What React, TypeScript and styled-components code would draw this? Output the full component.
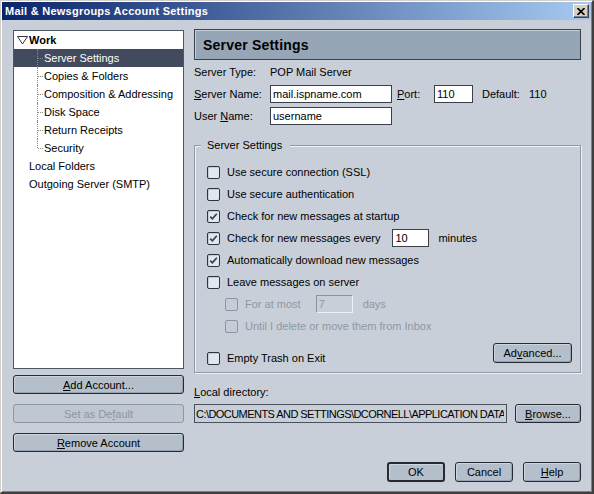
import React from 'react';
import styled, { createGlobalStyle, css } from 'styled-components';

const GlobalStyle = createGlobalStyle`
  * { box-sizing: border-box; }
  html, body { margin: 0; padding: 0; background: #c8cfd8; }
  body {
    font-family: "Liberation Sans", Arial, sans-serif;
    font-size: 11px;
    color: #000;
  }
`;

const Window = styled.div`
  width: 594px;
  height: 494px;
  display: flex;
  flex-direction: column;
  background: #c8cfd8;
  border-style: solid;
  border-width: 1px 2px 2px 1px;
  border-color: #d4d0c8 #404040 #404040 #d4d0c8;
  padding: 1px;
  box-shadow: inset 1px 1px 0 #ffffff, inset -1px -1px 0 #808080;
`;

const TitleBar = styled.div`
  height: 18px;
  flex: none;
  display: flex;
  align-items: center;
  justify-content: space-between;
  padding: 0 2px 0 3px;
  background: linear-gradient(90deg, #0a246a 0%, #a6caf0 100%);
`;

const Title = styled.span`
  color: #fff;
  font-weight: bold;
  font-size: 11px;
  letter-spacing: 0.25px;
`;

const CloseButton = styled.div`
  width: 16px;
  height: 14px;
  display: flex;
  align-items: center;
  justify-content: center;
  background: #d4d0c8;
  border-style: solid;
  border-width: 1px;
  border-color: #ffffff #404040 #404040 #ffffff;
  box-shadow: inset -1px -1px 0 #808080;
`;

const Body = styled.div`
  flex: 1;
  display: flex;
  flex-direction: column;
  padding: 9px 10px 0 11px;
`;

const Main = styled.div`
  display: flex;
  gap: 10px;
`;

const LeftColumn = styled.div`
  width: 171px;
  display: flex;
  flex-direction: column;
`;

const Tree = styled.div`
  margin-top: 1px;
  height: 339px;
  background: #fff;
  border: 1px solid #4e5563;
`;

const TreeRow = styled.div<{ $indent: number; $selected?: boolean; $bold?: boolean }>`
  position: relative;
  height: 18px;
  display: flex;
  align-items: center;
  padding-left: ${p => p.$indent}px;
  white-space: nowrap;
  font-weight: ${p => (p.$bold ? 'bold' : 'normal')};
  background: ${p => (p.$selected ? '#414b5d' : 'transparent')};
  color: ${p => (p.$selected ? '#fff' : '#000')};
`;

const ChildRow = styled(TreeRow)<{ $last?: boolean }>`
  &::before {
    content: '';
    position: absolute;
    left: 23px;
    top: 0;
    height: ${p => (p.$last ? '9px' : '18px')};
    border-left: 1px dotted #8a8a8a;
  }
  &::after {
    content: '';
    position: absolute;
    left: 24px;
    top: 9px;
    width: 5px;
    border-top: 1px dotted #8a8a8a;
  }
`;

const Twisty = styled.svg`
  width: 11px;
  height: 9px;
  margin-right: 1px;
  flex: none;
`;

const SideButtons = styled.div`
  margin-top: 6px;
  display: flex;
  flex-direction: column;
  gap: 10px;
`;

const Button = styled.button<{ $width?: number; $height?: number; $default?: boolean }>`
  width: ${p => (p.$width ? `${p.$width}px` : '100%')};
  height: ${p => p.$height ?? 19}px;
  padding: 0;
  font-family: "Liberation Sans", Arial, sans-serif;
  font-size: 11px;
  color: #000;
  background: #b4bfcb;
  border: 1px solid #262a33;
  border-radius: 3px;
  box-shadow: inset 1px 1px 0 #cdd5de, inset -1px -1px 0 #97a3b1;
  ${p =>
    p.$default &&
    css`
      border-width: 2px;
      box-shadow: inset 1px 1px 0 #cdd5de;
    `}
  &:disabled {
    color: #8c96a3;
    background: #bfc7d1;
    border-color: #8d97a5;
    box-shadow: none;
  }
  u { text-decoration: underline; }
`;

const RightColumn = styled.div`
  width: 387px;
  display: flex;
  flex-direction: column;
`;

const PanelHeader = styled.div`
  height: 31px;
  display: flex;
  align-items: center;
  padding-left: 8px;
  background: #97a6b6;
  border: 1px solid #3a404c;
  box-shadow: inset 1px 1px 0 #c4ced8;
  font-size: 14px;
  font-weight: bold;
  letter-spacing: 0.2px;
`;

const Fields = styled.div`
  margin-top: 3px;
  display: flex;
  flex-direction: column;
  gap: 4px;
`;

const FieldRow = styled.div`
  height: 18px;
  display: flex;
  align-items: center;
  white-space: nowrap;
`;

const FieldLabel = styled.span<{ $width: number; $gap?: number }>`
  width: ${p => p.$width}px;
  margin-left: ${p => p.$gap ?? 0}px;
  margin-right: -1px;
  flex: none;
`;

const TextInput = styled.input<{ $width: number; $gap?: number }>`
  width: ${p => p.$width}px;
  height: 18px;
  margin-left: ${p => p.$gap ?? 0}px;
  padding: 0 2px;
  font-family: "Liberation Sans", Arial, sans-serif;
  font-size: 11px;
  color: #000;
  background: #fff;
  border: 1px solid #3a3f4a;
  outline: none;
  &:disabled {
    color: #9099a6;
    background: #c8cfd8;
    border-color: #8a94a0 #eef1f4 #eef1f4 #8a94a0;
  }
  &:read-only:not(:disabled) {
    background: #c8cfd8;
    border-color: #4a505c;
  }
`;

const PathInput = styled(TextInput)`
  height: 19px;
  padding-left: 1px;
  letter-spacing: -0.55px;
`;

const Group = styled.fieldset`
  margin: 14px 0 0 0;
  min-width: 0;
  padding: 9px 8px 7px 12px;
  border: 1px solid #909aa6;
  box-shadow: inset 1px 1px 0 #eef1f4, 1px 1px 0 #eef1f4;
`;

const Legend = styled.legend`
  margin-left: -6px;
  padding: 0 8px 0 6px;
  line-height: 13px;
  background: #c8cfd8;
`;

const CheckRow = styled.div<{ $indent?: number }>`
  height: 22px;
  display: flex;
  align-items: center;
  padding-left: ${p => p.$indent ?? 0}px;
  white-space: nowrap;
`;

const CheckItem = styled.label<{ $disabled?: boolean }>`
  display: inline-flex;
  align-items: center;
  line-height: 13px;
  color: ${p => (p.$disabled ? '#8e98a5' : '#000')};
`;

const Box = styled.span<{ $disabled?: boolean }>`
  width: 13px;
  height: 13px;
  margin-right: 7px;
  flex: none;
  display: inline-flex;
  align-items: center;
  justify-content: center;
  border-radius: 2px;
  border: 1px solid ${p => (p.$disabled ? '#8c96a3' : '#2e3440')};
  background: ${p => (p.$disabled ? '#c6cdd6' : '#e1e7ed')};
  box-shadow: ${p => (p.$disabled ? 'none' : 'inset 1px 1px 0 #c4ccd5')};
`;

const Suffix = styled.span<{ $gap: number; $disabled?: boolean }>`
  margin-left: ${p => p.$gap}px;
  color: ${p => (p.$disabled ? '#8e98a5' : '#000')};
`;

const LastRow = styled.div`
  margin-top: 6px;
  height: 22px;
  display: flex;
  justify-content: space-between;
  align-items: flex-end;
  ${Button} {
    margin-bottom: 2px;
  }
`;

const DirLabel = styled.div`
  margin-top: 13px;
  line-height: 13px;
`;

const DirRow = styled.div`
  margin-top: 5px;
  display: flex;
  gap: 8px;
`;

const Footer = styled.div`
  margin-top: 10px;
  display: flex;
  justify-content: flex-end;
  gap: 10px;
`;

const Check: React.FC<{ checked?: boolean; disabled?: boolean; children: React.ReactNode }> = ({
  checked,
  disabled,
  children,
}) => (
  <CheckItem $disabled={disabled}>
    <Box $disabled={disabled}>
      {checked && (
        <svg width="9" height="9" viewBox="0 0 9 9">
          <path d="M1.2 4.6 L3.4 6.8 L7.8 1.8" fill="none" stroke="#3a3f48" strokeWidth="1.7" />
        </svg>
      )}
    </Box>
    {children}
  </CheckItem>
);

const children = [
  'Server Settings',
  'Copies & Folders',
  'Composition & Addressing',
  'Disk Space',
  'Return Receipts',
  'Security',
];

const App: React.FC = () => {
  return (
    <>
      <GlobalStyle />
      <Window>
        <TitleBar>
          <Title>Mail &amp; Newsgroups Account Settings</Title>
          <CloseButton>
            <svg width="8" height="7" viewBox="0 0 8 7">
              <path d="M0.5 0 L7.5 7 M7.5 0 L0.5 7" stroke="#000" strokeWidth="1.6" />
            </svg>
          </CloseButton>
        </TitleBar>
        <Body>
          <Main>
            <LeftColumn>
              <Tree>
                <TreeRow $indent={3} $bold>
                  <Twisty viewBox="0 0 11 9">
                    <polygon points="0.5,0.5 10.5,0.5 5.5,8" fill="#fff" stroke="#333" strokeWidth="1" />
                  </Twisty>
                  Work
                </TreeRow>
                {children.map((name, i) => (
                  <ChildRow key={name} $indent={30} $selected={i === 0} $last={i === children.length - 1}>
                    {name}
                  </ChildRow>
                ))}
                <TreeRow $indent={15}>Local Folders</TreeRow>
                <TreeRow $indent={15}>Outgoing Server (SMTP)</TreeRow>
              </Tree>
              <SideButtons>
                <Button>
                  <u>A</u>dd Account...
                </Button>
                <Button disabled>
                  Set as De<u>f</u>ault
                </Button>
                <Button>
                  <u>R</u>emove Account
                </Button>
              </SideButtons>
            </LeftColumn>

            <RightColumn>
              <PanelHeader>Server Settings</PanelHeader>
              <Fields>
                <FieldRow>
                  <FieldLabel $width={77}>Server Type:</FieldLabel>
                  <span>POP Mail Server</span>
                </FieldRow>
                <FieldRow>
                  <FieldLabel $width={77}>
                    <u>S</u>erver Name:
                  </FieldLabel>
                  <TextInput $width={122} defaultValue="mail.ispname.com" />
                  <FieldLabel $width={38} $gap={5}>
                    <u>P</u>ort:
                  </FieldLabel>
                  <TextInput $width={39} defaultValue="110" />
                  <FieldLabel $width={48} $gap={9}>
                    Default:
                  </FieldLabel>
                  <span>110</span>
                </FieldRow>
                <FieldRow>
                  <FieldLabel $width={77}>
                    User <u>N</u>ame:
                  </FieldLabel>
                  <TextInput $width={122} defaultValue="username" />
                </FieldRow>
              </Fields>

              <Group>
                <Legend>Server Settings</Legend>
                <CheckRow>
                  <Check>Use secure connection (SSL)</Check>
                </CheckRow>
                <CheckRow>
                  <Check>Use secure authentication</Check>
                </CheckRow>
                <CheckRow>
                  <Check checked>Check for new messages at startup</Check>
                </CheckRow>
                <CheckRow>
                  <Check checked>Check for new messages every</Check>
                  <TextInput $width={37} $gap={12} defaultValue="10" />
                  <Suffix $gap={9}>minutes</Suffix>
                </CheckRow>
                <CheckRow>
                  <Check checked>Automatically download new messages</Check>
                </CheckRow>
                <CheckRow>
                  <Check>Leave messages on server</Check>
                </CheckRow>
                <CheckRow $indent={18}>
                  <Check disabled>For at most</Check>
                  <TextInput $width={37} $gap={15} defaultValue="7" disabled />
                  <Suffix $gap={10} $disabled>
                    days
                  </Suffix>
                </CheckRow>
                <CheckRow $indent={18}>
                  <Check disabled>Until I delete or move them from Inbox</Check>
                </CheckRow>
                <LastRow>
                  <Check>Empty Trash on Exit</Check>
                  <Button $width={79} $height={20}>
                    Ad<u>v</u>anced...
                  </Button>
                </LastRow>
              </Group>

              <DirLabel>
                <u>L</u>ocal directory:
              </DirLabel>
              <DirRow>
                <PathInput
                  $width={313}
                  readOnly
                  value="C:\DOCUMENTS AND SETTINGS\DCORNELL\APPLICATION DATA"
                />
                <Button $width={66} $height={19}>
                  <u>B</u>rowse...
                </Button>
              </DirRow>
            </RightColumn>
          </Main>

          <Footer>
            <Button $width={58} $height={20} $default>
              OK
            </Button>
            <Button $width={58} $height={20}>
              Cancel
            </Button>
            <Button $width={58} $height={20}>
              <u>H</u>elp
            </Button>
          </Footer>
        </Body>
      </Window>
    </>
  );
};

export default App;
